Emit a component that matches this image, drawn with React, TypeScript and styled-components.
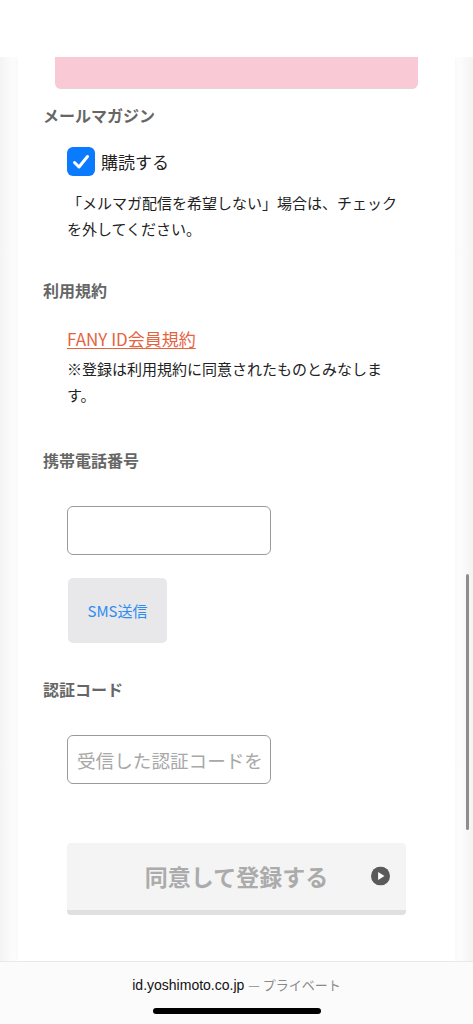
import React from "react";
import styled, { createGlobalStyle } from "styled-components";

const GlobalStyle = createGlobalStyle`
  html, body {
    margin: 0;
    padding: 0;
    background: #ffffff;
  }
  body {
    font-family: "Noto Sans CJK JP", "Noto Sans", sans-serif;
    color: #222;
  }
  * { box-sizing: border-box; }
`;

const Page = styled.div`
  position: relative;
  width: 473px;
  height: 1024px;
  display: flex;
  flex-direction: column;
  overflow: hidden;
  background: #ffffff;
`;

const TopSpace = styled.div`
  height: 57px;
  flex-shrink: 0;
  background: #ffffff;
`;

const Main = styled.div`
  flex: 1;
  display: flex;
  padding: 0 18px;
  overflow: hidden;
  background: linear-gradient(to right, #f4f4f4 0px, #ffffff 18px, #ffffff 455px, #f4f4f4 473px);
`;

const Card = styled.div`
  flex: 1;
  background: #ffffff;
  box-shadow: 0 0 6px rgba(0, 0, 0, 0.06);
  display: flex;
  flex-direction: column;
`;

const PinkBox = styled.div`
  margin: 0 37px;
  height: 32px;
  background: #f9c9d6;
  border-radius: 0 0 6px 6px;
  border-bottom: 1px solid #e2d4d8;
`;

const Section = styled.section<{ top: number }>`
  margin-top: ${({ top }) => top}px;
  padding-left: 25px;
`;

const Heading = styled.h2`
  margin: 0;
  font-size: 16px;
  line-height: 24px;
  font-weight: 700;
  color: #666666;
`;

const Body = styled.div<{ top: number }>`
  margin-top: ${({ top }) => top}px;
  padding-left: 24px;
  width: 362px;
`;

const CheckRow = styled.label`
  display: flex;
  align-items: center;
  gap: 6px;
  font-size: 17px;
  color: #222;
`;

const CheckBox = styled.span`
  width: 28px;
  height: 29px;
  border-radius: 6px;
  background: #0a7aff;
  display: flex;
  align-items: center;
  justify-content: center;
`;

const Note = styled.p<{ top: number }>`
  margin: ${({ top }) => top}px 0 0;
  font-size: 15px;
  line-height: 26px;
  color: #222;
`;

const TermsLink = styled.a`
  font-size: 17px;
  line-height: 24px;
  color: #e6633f;
  text-decoration: underline;
  text-underline-offset: 2px;
  text-decoration-thickness: 1px;
`;

const Field = styled.input`
  display: block;
  width: 204px;
  height: 49px;
  border: 1px solid #9a9a9a;
  border-radius: 6px;
  padding: 0 9px;
  font-family: inherit;
  font-size: 18.6px;
  background: #ffffff;
  &::placeholder {
    color: #a8a8a8;
  }
`;

const SmsButton = styled.button`
  margin-top: 23px;
  margin-left: 1px;
  width: 99px;
  height: 65px;
  border: none;
  border-radius: 5px;
  background: #e8e8ea;
  color: #2d8cf0;
  font-family: inherit;
  font-size: 15px;
  padding: 0;
`;

const SubmitWrap = styled.div`
  margin: 59px 49px 0;
`;

const SubmitButton = styled.button`
  width: 100%;
  height: 72px;
  border: none;
  border-radius: 4px;
  background: #f4f4f4;
  border-bottom: 5px solid #e0e0e0;
  display: flex;
  align-items: center;
  justify-content: center;
  position: relative;
  font-family: inherit;
  font-size: 23px;
  font-weight: 700;
  color: #ababab;
  padding: 0 0 2px 0;
`;

const PlayIcon = styled.span`
  position: absolute;
  right: 16px;
  top: 50%;
  transform: translateY(-55%);
  display: flex;
`;

const BottomBar = styled.div`
  height: 63px;
  flex-shrink: 0;
  background: #fbfbfb;
  border-top: 1px solid #e9e9e9;
  display: flex;
  flex-direction: column;
  align-items: center;
`;

const UrlLine = styled.div`
  margin-top: 13px;
  font-family: "Liberation Sans", "Noto Sans CJK JP", sans-serif;
  font-size: 14px;
  line-height: 19px;
  color: #111;
`;

const Private = styled.span`
  color: #8a8a8a;
  font-family: "Noto Sans CJK JP", sans-serif;
  font-size: 13px;
`;

const HomeIndicator = styled.div`
  margin-top: 13px;
  width: 168px;
  height: 6px;
  border-radius: 3px;
  background: #000;
`;

const ScrollThumb = styled.div`
  position: absolute;
  left: 466px;
  top: 574px;
  width: 3px;
  height: 256px;
  border-radius: 2px;
  background: #8e8e8e;
`;

export default function App() {
  return (
    <>
      <GlobalStyle />
      <Page>
        <TopSpace />
        <Main>
          <Card>
            <PinkBox />

            <Section top={14}>
              <Heading>メールマガジン</Heading>
              <Body top={20}>
                <CheckRow>
                  <CheckBox>
                    <svg width="20" height="20" viewBox="0 0 20 20">
                      <path d="M3.5 10.5 L8 15 L16.5 4.5" fill="none" stroke="#fff" strokeWidth="3" strokeLinecap="round" strokeLinejoin="round" />
                    </svg>
                  </CheckBox>
                  購読する
                </CheckRow>
                <Note top={14}>「メルマガ配信を希望しない」場合は、チェックを外してください。</Note>
              </Body>
            </Section>

            <Section top={36}>
              <Heading>利用規約</Heading>
              <Body top={25}>
                <TermsLink href="#">FANY ID会員規約</TermsLink>
                <Note top={5}>※登録は利用規約に同意されたものとみなします。</Note>
              </Body>
            </Section>

            <Section top={40}>
              <Heading>携帯電話番号</Heading>
              <Body top={34}>
                <Field type="tel" />
                <SmsButton>SMS送信</SmsButton>
              </Body>
            </Section>

            <Section top={34}>
              <Heading>認証コード</Heading>
              <Body top={34}>
                <Field placeholder="受信した認証コードを入力" />
              </Body>
            </Section>

            <SubmitWrap>
              <SubmitButton>
                同意して登録する
                <PlayIcon>
                  <svg width="19" height="19" viewBox="0 0 20 20">
                    <circle cx="10" cy="10" r="10" fill="#5a5a5a" />
                    <path d="M7.5 5.8 L14.2 10 L7.5 14.2 Z" fill="#fff" />
                  </svg>
                </PlayIcon>
              </SubmitButton>
            </SubmitWrap>
          </Card>
        </Main>
        <BottomBar>
          <UrlLine>
            id.yoshimoto.co.jp <Private>— プライベート</Private>
          </UrlLine>
          <HomeIndicator />
        </BottomBar>
        <ScrollThumb />
      </Page>
    </>
  );
}
